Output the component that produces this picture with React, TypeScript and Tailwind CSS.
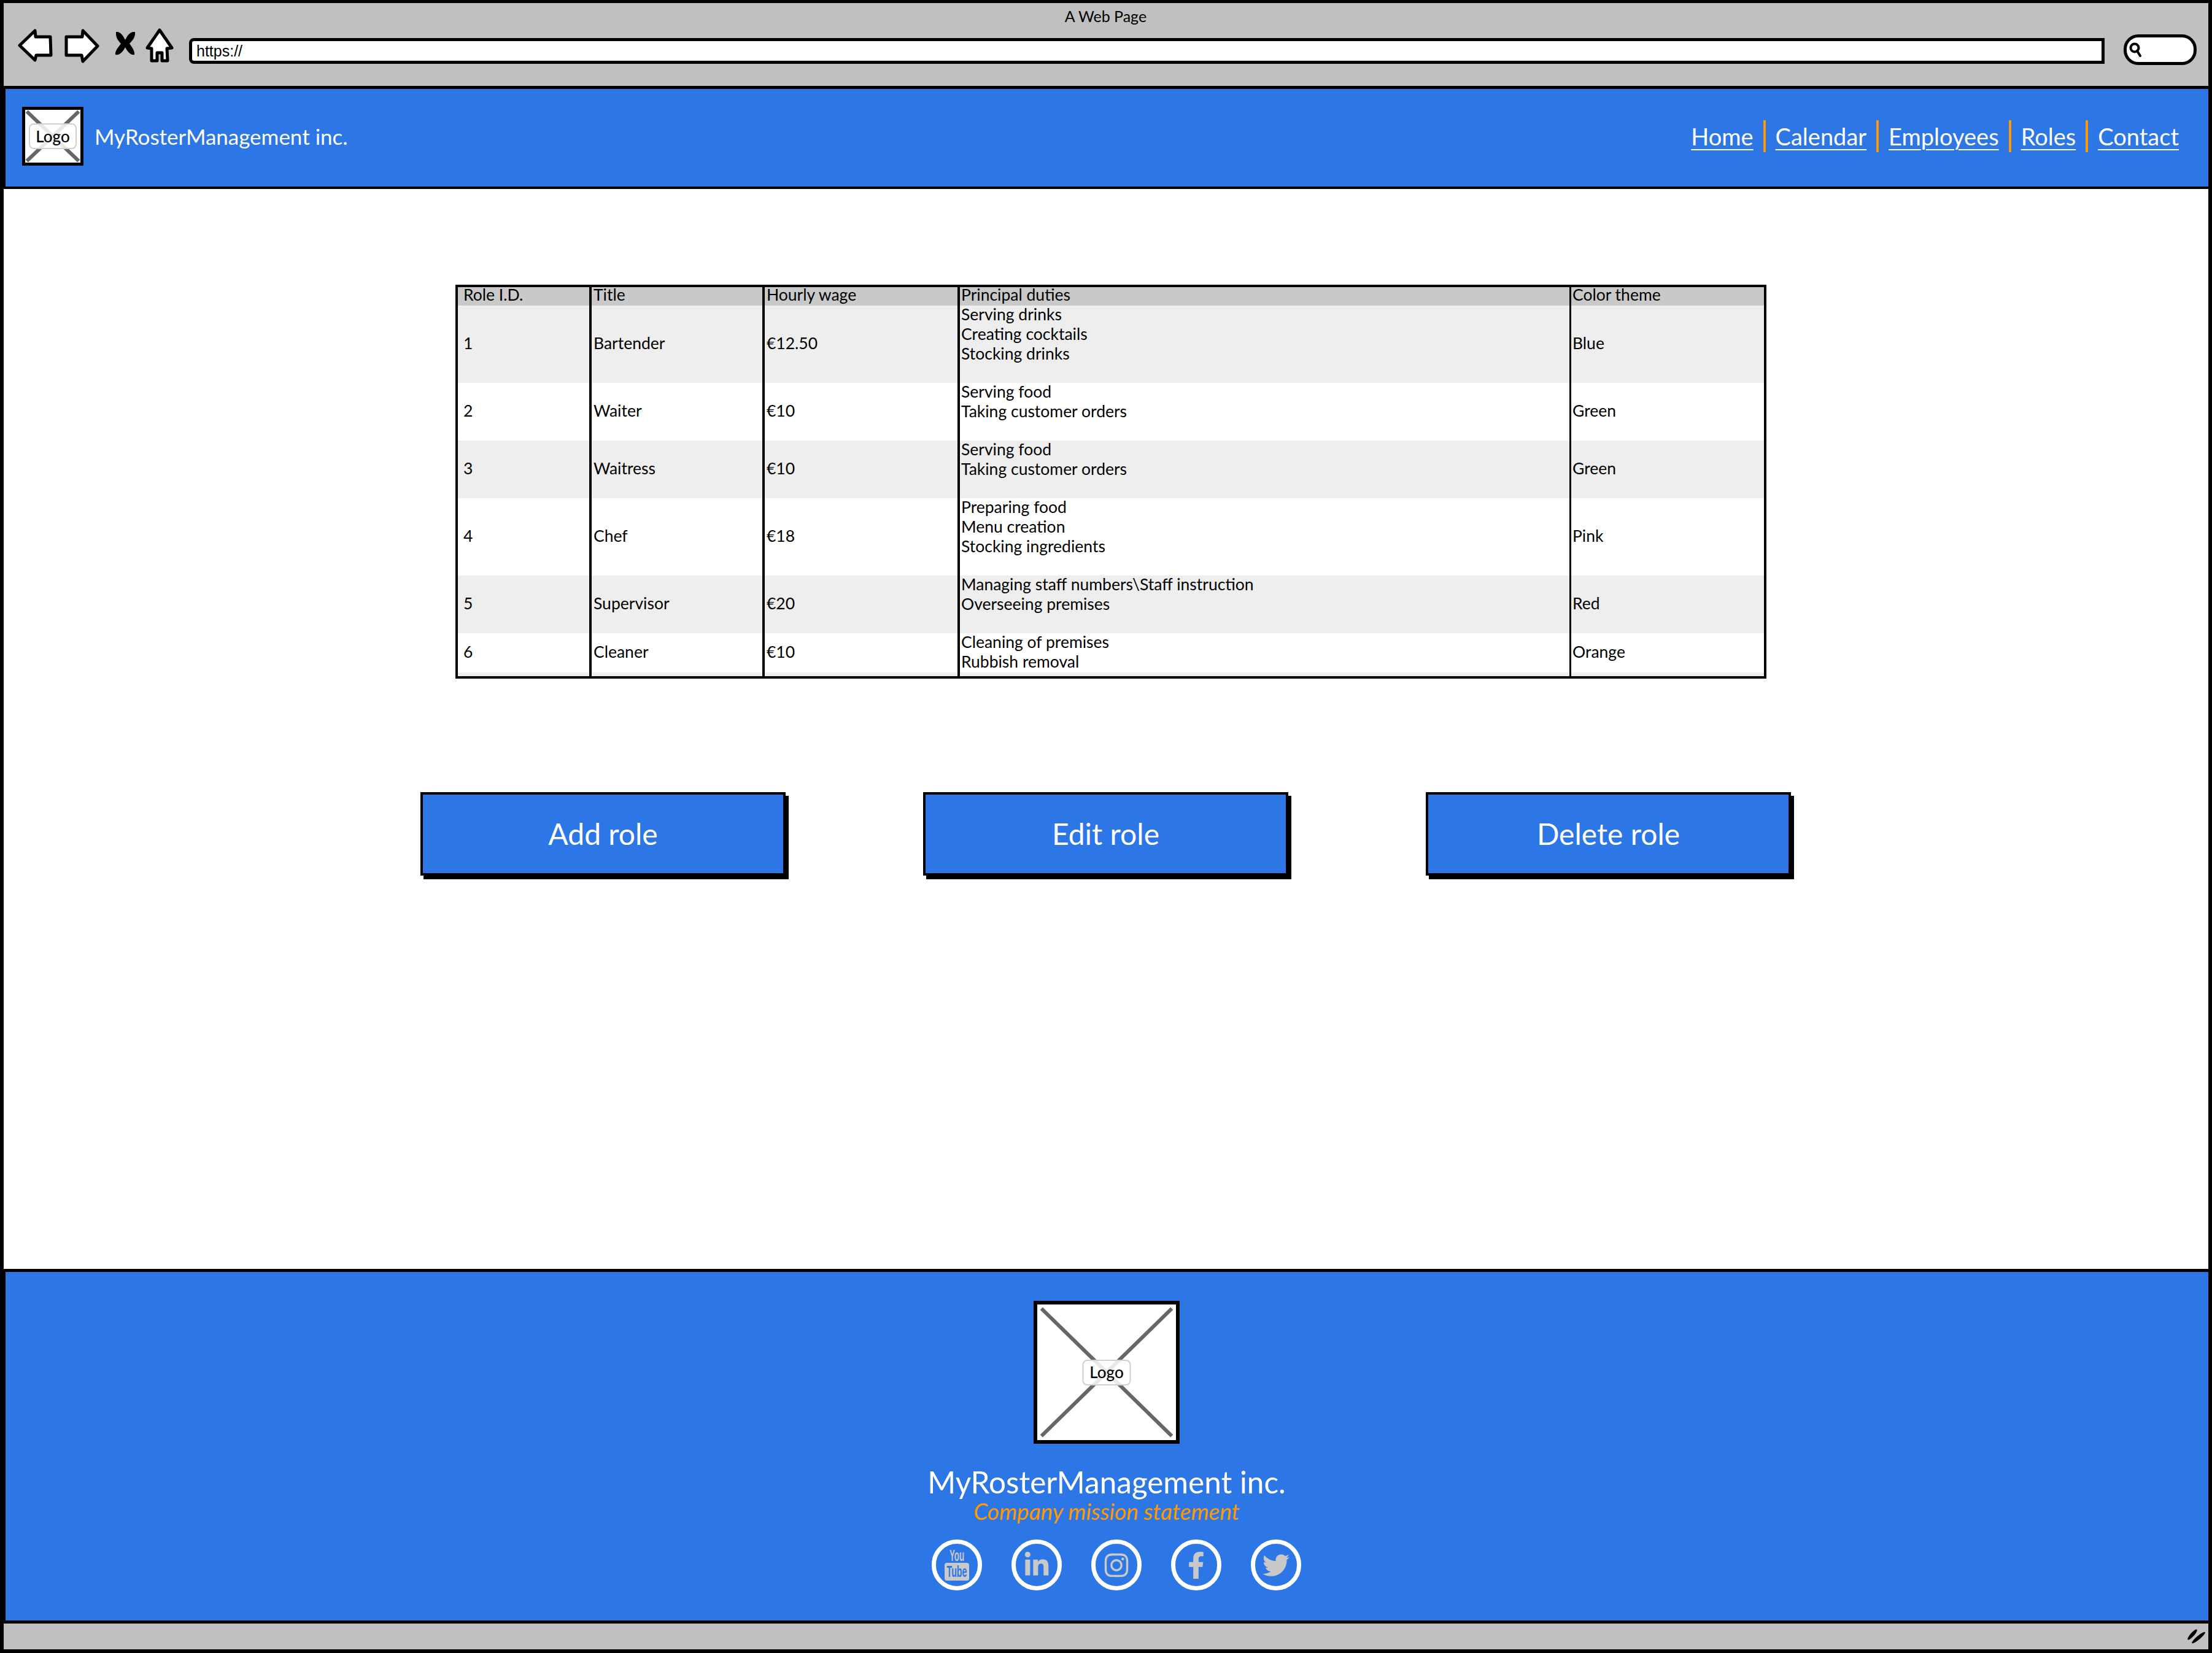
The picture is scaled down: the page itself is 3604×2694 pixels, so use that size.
import { FaLinkedinIn, FaInstagram, FaFacebookF, FaTwitter } from "react-icons/fa";

const rows = [
  { id: "1", title: "Bartender", wage: "€12.50", duties: ["Serving drinks", "Creating cocktails", "Stocking drinks"], color: "Blue", alt: true, tall: true },
  { id: "2", title: "Waiter", wage: "€10", duties: ["Serving food", "Taking customer orders"], color: "Green", alt: false, tall: true },
  { id: "3", title: "Waitress", wage: "€10", duties: ["Serving food", "Taking customer orders"], color: "Green", alt: true, tall: true },
  { id: "4", title: "Chef", wage: "€18", duties: ["Preparing food", "Menu creation", "Stocking ingredients"], color: "Pink", alt: false, tall: true },
  { id: "5", title: "Supervisor", wage: "€20", duties: ["Managing staff numbers\\Staff instruction", "Overseeing premises"], color: "Red", alt: true, tall: true },
  { id: "6", title: "Cleaner", wage: "€10", duties: ["Cleaning of premises", "Rubbish removal"], color: "Orange", alt: false, tall: false },
];

const navLinks = ["Home", "Calendar", "Employees", "Roles", "Contact"];

function LogoBox({ box, chip }: { box: string; chip: string }) {
  return (
    <div className={`relative bg-white border-black shrink-0 ${box}`}>
      <svg className="absolute inset-0 w-full h-full" viewBox="0 0 100 100" preserveAspectRatio="none">
        <line x1="3" y1="3" x2="97" y2="97" stroke="#666666" strokeWidth="6" vectorEffect="non-scaling-stroke" />
        <line x1="97" y1="3" x2="3" y2="97" stroke="#666666" strokeWidth="6" vectorEffect="non-scaling-stroke" />
      </svg>
      <div className={`absolute left-1/2 top-1/2 -translate-x-1/2 -translate-y-1/2 flex items-center justify-center rounded-[8px] border-2 border-[#d0d0d0] bg-white/85 text-black font-medium font-['Lato',sans-serif] ${chip}`}>
        Logo
      </div>
    </div>
  );
}

function Social({ children }: { children: React.ReactNode }) {
  return (
    <div className="w-[82px] h-[83px] rounded-full border-[7px] border-white flex items-center justify-center text-[#c9c9c9] text-[44px]">
      {children}
    </div>
  );
}

function YouTubeMark() {
  return (
    <svg width="40" height="58" viewBox="0 -8 40 58" className="-mt-[8px]">
      <text transform="translate(20 18) scale(0.83 1.6)" textAnchor="middle" fontFamily="'Liberation Sans',sans-serif" fontWeight="700" fontSize="16" fill="#c9c9c9">You</text>
      <rect x="0" y="21" width="40" height="29" rx="4" fill="#c9c9c9" />
      <text transform="translate(20 44) scale(0.89 1.6)" textAnchor="middle" fontFamily="'Liberation Sans',sans-serif" fontWeight="700" fontSize="16" fill="#2c77e5">Tube</text>
    </svg>
  );
}

export default function App() {
  return (
    <div className="w-[3604px] h-[2694px] bg-white flex flex-col border-t-[5px] border-l-[6px] border-r-[6px] border-b-[6px] border-black font-['Lato',sans-serif] text-black overflow-hidden">
      {/* browser chrome */}
      <div className="h-[135px] bg-[#c0c0c0] flex flex-col shrink-0 -ml-px">
        <div className="h-[44px] flex items-center justify-center text-[25px] leading-none pb-[2px]">A Web Page</div>
        <div className="flex items-start pl-[24px] pr-[19px] pt-[2px]">
          <svg width="58" height="54" viewBox="0 0 58 54" className="mt-[-4px] shrink-0">
            <path d="M3 27 L28 3 L29 13 L53 13 L54 43 L30 43 L28 51 Z" fill="#fff" stroke="#000" strokeWidth="5" strokeLinejoin="round" />
          </svg>
          <svg width="60" height="56" viewBox="0 0 60 56" className="mt-[-4px] ml-[16px] shrink-0">
            <path d="M56 28 L32 3 L31 13 L5 13 L5 43 L30 43 L32 53 Z" fill="#fff" stroke="#000" strokeWidth="5" strokeLinejoin="round" />
          </svg>
          <svg width="34" height="40" viewBox="0 0 34 40" className="ml-[24px] shrink-0">
            <path d="M2 1 C10 0 14 8 17 14 C20 8 24 0 33 1 C34 10 28 16 24 20 C28 26 33 32 32 38 C26 40 20 32 17 26 C14 32 8 40 1 38 C0 32 6 26 10 20 C6 16 1 10 2 1 Z" fill="#000" />
          </svg>
          <svg width="46" height="56" viewBox="0 0 46 56" className="mt-[-5px] ml-[16px] shrink-0">
            <path d="M23 3 L43 32 L35 33 L36 53 L27 53 L27 40 L19 40 L19 53 L10 53 L10 33 L3 32 Z" fill="#fff" stroke="#000" strokeWidth="5" strokeLinejoin="round" />
          </svg>
          <div className="ml-[25px] w-[3121px] h-[42px] mt-[11px] bg-white border-[5px] border-black rounded-l-[8px] flex items-center pl-[7px] text-[25px] leading-none font-['Liberation_Sans',sans-serif] shrink-0">
            https://
          </div>
          <div className="ml-[31px] w-[119px] h-[50px] mt-[5px] bg-white border-[5px] border-black rounded-[24px] flex items-center pl-[2px] shrink-0">
            <svg width="24" height="28" viewBox="0 0 24 28">
              <circle cx="11" cy="11" r="6.5" fill="none" stroke="#000" strokeWidth="4" />
              <path d="M15 16 L20 24" stroke="#000" strokeWidth="4" strokeLinecap="round" />
            </svg>
          </div>
        </div>
      </div>

      {/* nav */}
      <div className="h-[168px] shrink-0 -ml-px bg-[#2c77e5] border-t-[5px] border-b-[4px] border-l-[4px] border-black flex items-center justify-between pl-[27px] pr-[48px] pb-[5px]">
        <div className="flex items-center gap-[18px]">
          <LogoBox box="w-[100px] h-[96px] border-[5px]" chip="w-[78px] h-[42px] text-[26px]" />
          <span className="text-[35px] leading-none text-white">MyRosterManagement inc.</span>
        </div>
        <div className="flex items-center">
          {navLinks.map((l, i) => (
            <div key={l} className="flex items-center">
              {i > 0 && <span className="w-[4px] h-[52px] bg-[#ff9900] mx-[16px]" />}
              <span className="text-[38px] leading-none text-white underline underline-offset-[6px] decoration-2">{l}</span>
            </div>
          ))}
        </div>
      </div>

      {/* content */}
      <div className="flex-1 min-h-0 flex flex-col -ml-px">
        <table className="mt-[156px] ml-[737px] w-[2136px] table-fixed border-separate border-spacing-0 border-[4px] border-black text-[26.5px] leading-[32px]">
          <colgroup>
            <col className="w-[218px]" />
            <col className="w-[282px]" />
            <col className="w-[318px]" />
            <col className="w-[996px]" />
            <col className="w-[314px]" />
          </colgroup>
          <thead>
            <tr className="bg-[#c9c9c9] h-[30px]">
              <th className="font-normal text-left align-top border-r-[4px] border-black pl-[9px] leading-[24px]">Role I.D.</th>
              <th className="font-normal text-left align-top border-r-[4px] border-black pl-[3px] leading-[24px]">Title</th>
              <th className="font-normal text-left align-top border-r-[4px] border-black pl-[3px] leading-[24px]">Hourly wage</th>
              <th className="font-normal text-left align-top border-r-[3px] border-black pl-[2px] leading-[24px]">Principal duties</th>
              <th className="font-normal text-left align-top pl-[2px] leading-[24px]">Color theme</th>
            </tr>
          </thead>
          <tbody>
            {rows.map((r) => (
              <tr key={r.id} className={r.alt ? "bg-[#eeeeee]" : "bg-white"}>
                <td className="align-middle border-r-[4px] border-black pl-[9px] pb-[4px]">{r.id}</td>
                <td className="align-middle border-r-[4px] border-black pl-[3px] pb-[4px]">{r.title}</td>
                <td className="align-middle border-r-[4px] border-black pl-[3px] pb-[4px]">{r.wage}</td>
                <td className={`align-top border-r-[3px] border-black pl-[2px] ${r.tall ? "pb-[30px]" : "pb-0"}`}>
                  <div className="-mt-[2px] mb-[2px]">
                    {r.duties.map((d) => (
                      <div key={d}>{d}</div>
                    ))}
                  </div>
                </td>
                <td className="align-middle pl-[2px] pb-[4px]">{r.color}</td>
              </tr>
            ))}
            <tr className="bg-[#eeeeee] h-[6px]">
              <td className="border-r-[4px] border-black p-0 leading-none text-[0px]"></td>
              <td className="border-r-[4px] border-black p-0 leading-none text-[0px]"></td>
              <td className="border-r-[4px] border-black p-0 leading-none text-[0px]"></td>
              <td className="border-r-[3px] border-black p-0 leading-none text-[0px]"></td>
              <td className="p-0 leading-none text-[0px]"></td>
            </tr>
          </tbody>
        </table>

        <div className="mt-[185px] flex justify-center gap-[224px]">
          {["Add role", "Edit role", "Delete role"].map((b) => (
            <div key={b} className="w-[595px] h-[136px] bg-[#2c77e5] border-[4px] border-black shadow-[5px_6px_0_#000] flex items-center justify-center text-white text-[48px] leading-none">
              {b}
            </div>
          ))}
        </div>
      </div>

      {/* footer */}
      <div className="h-[578px] shrink-0 -ml-px bg-[#2c77e5] border-t-[5px] border-b-[5px] border-l-[4px] border-black flex flex-col items-center pt-[47px] pr-[1px]">
        <LogoBox box="w-[238px] h-[233px] border-[6px]" chip="w-[79px] h-[42px] text-[26px]" />
        <div className="mt-[32px] text-[49.5px] leading-[60px] text-white">MyRosterManagement inc.</div>
        <div className="mt-[-4px] text-[37px] leading-[44px] italic text-[#ff9900]">Company mission statement</div>
        <div className="mt-[24px] ml-[32px] flex gap-[48px]">
          <Social><YouTubeMark /></Social>
          <Social><FaLinkedinIn /></Social>
          <Social><FaInstagram /></Social>
          <Social><FaFacebookF /></Social>
          <Social><FaTwitter /></Social>
        </div>
      </div>

      {/* status bar */}
      <div className="h-[42px] shrink-0 bg-[#c0c0c0] -ml-px flex items-center justify-end pr-[4px]">
        <svg width="32" height="26" viewBox="0 0 32 26">
          <ellipse cx="10" cy="10" rx="11" ry="3" transform="rotate(-48 10 10)" fill="#000" />
          <ellipse cx="20" cy="15" rx="14" ry="3" transform="rotate(-40 20 15)" fill="#000" />
        </svg>
      </div>
    </div>
  );
}
